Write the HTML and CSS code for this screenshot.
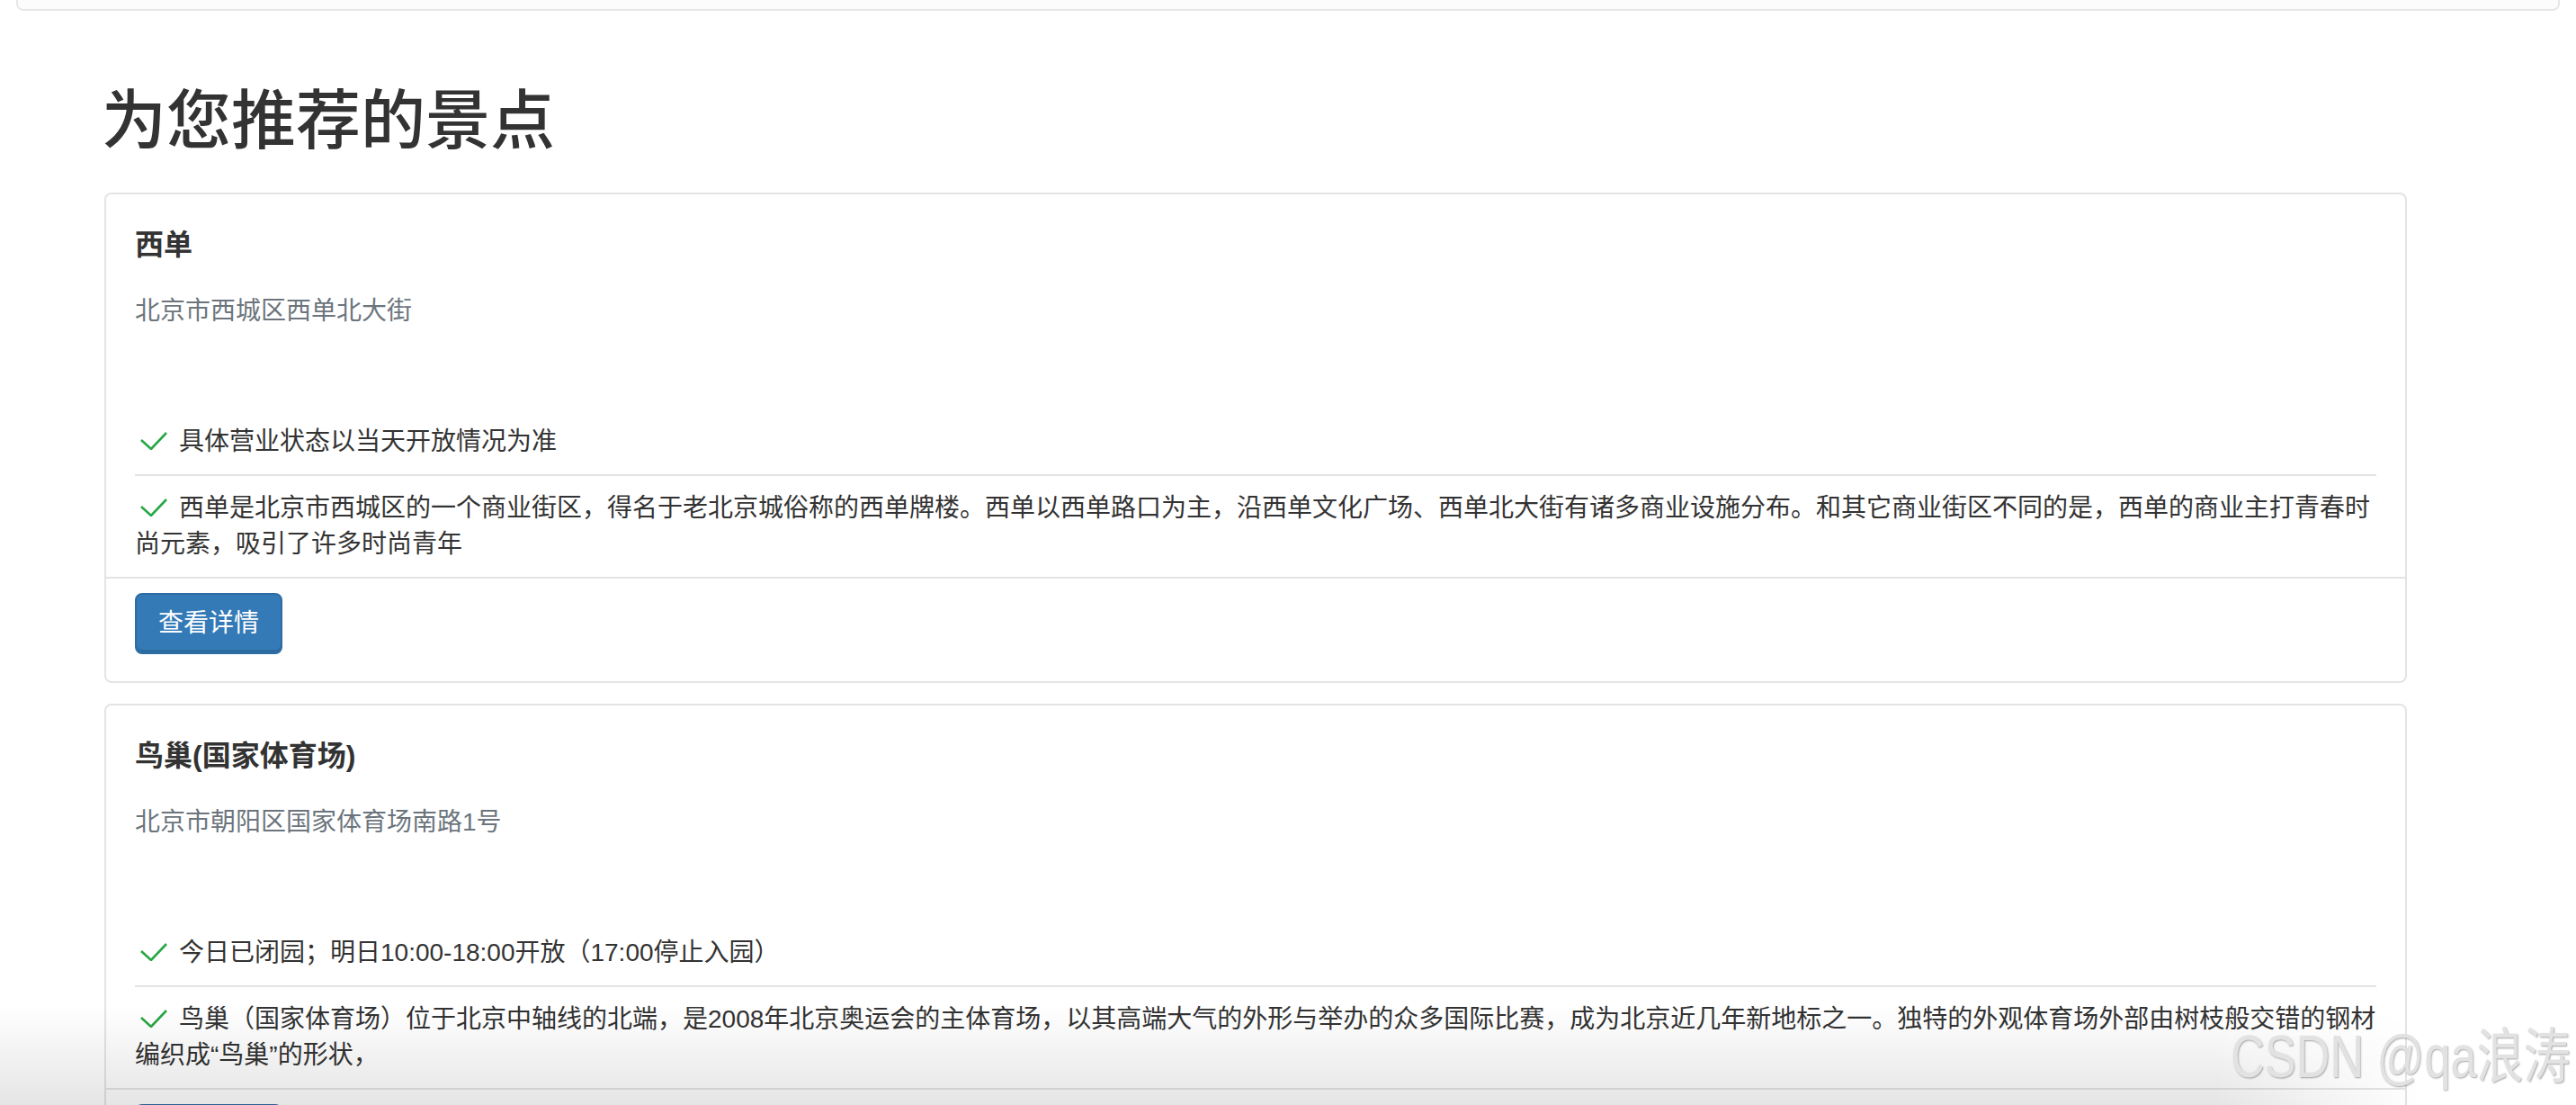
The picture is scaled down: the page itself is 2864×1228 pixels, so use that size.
FILE: index.html
```html
<!DOCTYPE html>
<html lang="zh-CN">
<head>
  <meta charset="UTF-8">
  <meta name="viewport" content="width=device-width, initial-scale=1.0">
  <title>为您推荐的景点</title>
  <link rel="stylesheet" href="styles.css">
</head>
<body>
  <div class="navbar"></div>

  <main class="page">
    <h1 class="page-title">为您推荐的景点</h1>

    <div class="card">
      <div class="card-body">
        <h5 class="card-title">西单</h5>
        <p class="card-subtitle">北京市西城区西单北大街</p>
        <ul class="info-list">
          <li><svg class="check" viewBox="0 0 30 20"><polyline points="1,9 12,19 29,1"/></svg>具体营业状态以当天开放情况为准</li>
          <li><svg class="check" viewBox="0 0 30 20"><polyline points="1,9 12,19 29,1"/></svg>西单是北京市西城区的一个商业街区，得名于老北京城俗称的西单牌楼。西单以西单路口为主，沿西单文化广场、西单北大街有诸多商业设施分布。和其它商业街区不同的是，西单的商业主打青春时尚元素，吸引了许多时尚青年</li>
        </ul>
      </div>
      <div class="card-footer">
        <button class="btn btn-primary">查看详情</button>
      </div>
    </div>

    <div class="card">
      <div class="card-body">
        <h5 class="card-title">鸟巢(国家体育场)</h5>
        <p class="card-subtitle">北京市朝阳区国家体育场南路1号</p>
        <ul class="info-list">
          <li><svg class="check" viewBox="0 0 30 20"><polyline points="1,9 12,19 29,1"/></svg>今日已闭园；明日10:00-18:00开放（17:00停止入园）</li>
          <li><svg class="check" viewBox="0 0 30 20"><polyline points="1,9 12,19 29,1"/></svg>鸟巢（国家体育场）位于北京中轴线的北端，是2008年北京奥运会的主体育场，以其高端大气的外形与举办的众多国际比赛，成为北京近几年新地标之一。独特的外观体育场外部由树枝般交错的钢材编织成“鸟巢”的形状，</li>
        </ul>
      </div>
      <div class="card-footer">
        <button class="btn btn-primary">查看详情</button>
      </div>
    </div>
  </main>

  <div class="shade"></div>
  <div class="watermark">CSDN @qa浪涛</div>
</body>
</html>
```

FILE: styles.css
```css
* { box-sizing: border-box; }
body {
  margin: 0;
  font-family: "Liberation Sans", "Noto Sans CJK SC", sans-serif;
  font-size: 28px;
  line-height: 40px;
  color: #333;
  background: #fff;
  overflow: hidden;
}
.navbar {
  height: 12px;
  margin: 0 18px;
  background: #fcfcfc;
  border: 2px solid #e7e7e7;
  border-top: none;
  border-radius: 0 0 8px 8px;
}
.page {
  width: 2560px;
  margin-left: 116px;
}
.page-title {
  margin: 83px 0 40px -3px;
  font-size: 72px;
  line-height: 79px;
  font-weight: 500;
  color: #333;
}
.card {
  background: #fff;
  border: 2px solid #e4e4e4;
  border-radius: 8px;
  margin-bottom: 23px;
}
.card-body { padding: 36px 32px 0; }
.card-title {
  margin: 0 0 34px;
  font-size: 32px;
  line-height: 40px;
  font-weight: 600;
  color: #333;
}
.card-subtitle {
  margin: 0 0 89px;
  color: #6c757d;
}
.info-list {
  list-style: none;
  margin: 0;
  padding: 0;
}
.info-list li { padding: 16px 0; }
.info-list li + li { border-top: 2px solid #e4e4e4; }
.check {
  width: 30px;
  height: 20px;
  margin: 0 13px 0 6px;
  fill: none;
  stroke: #28a745;
  stroke-width: 2.6;
}
.card-footer {
  border-top: 2px solid #e4e4e4;
  padding: 16px 32px 30px;
}
.btn {
  display: inline-block;
  padding: 12px 24px;
  font-family: inherit;
  font-size: 28px;
  line-height: 40px;
  border-radius: 8px;
  cursor: pointer;
}
.btn-primary {
  color: #fff;
  background: #337ab7;
  border: 2px solid #2e6da4;
  box-shadow: inset 0 -3px 0 rgba(0,0,0,0.12);
}
.shade {
  position: fixed;
  left: 0;
  right: 0;
  bottom: 0;
  height: 110px;
  background: linear-gradient(rgba(0,0,0,0), rgba(0,0,0,0.1));
  -webkit-mask-image: linear-gradient(to right, #000 86%, transparent 94%);
  mask-image: linear-gradient(to right, #000 86%, transparent 94%);
  pointer-events: none;
}
.watermark {
  position: fixed;
  top: 1141px;
  right: 6px;
  font-size: 66px;
  line-height: 66px;
  color: #e2e2e2;
  text-shadow: 1px 1px 2px rgba(0,0,0,0.35);
  transform: scaleX(0.79);
  transform-origin: right center;
  white-space: nowrap;
  pointer-events: none;
}
```
